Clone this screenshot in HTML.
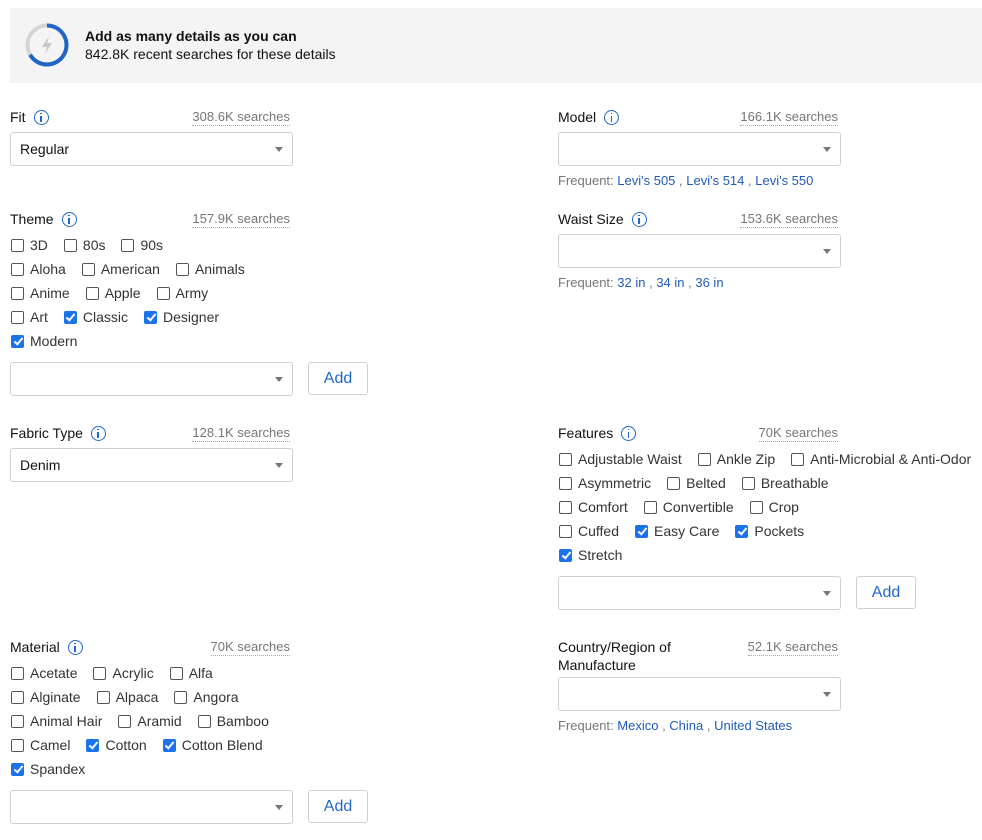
<!DOCTYPE html>
<html><head><meta charset="utf-8"><style>
*{box-sizing:border-box;margin:0;padding:0}
body{width:982px;height:840px;background:#fff;font-family:"Liberation Sans",Arial,sans-serif;color:#333;position:relative;overflow:hidden}
.a{position:absolute}
.hdr{left:10px;top:8px;width:972px;height:75px;background:#f4f4f4}
.lbl{font-size:14px;color:#111;line-height:18px;display:flex;align-items:center}
.info{display:inline-block;width:15px;height:15px;border:1.3px solid #1f66c8;border-radius:50%;margin-left:8px;position:relative}
.info:before{content:"";position:absolute;left:5.5px;top:2px;width:1.6px;height:1.6px;background:#1f66c8}
.info:after{content:"";position:absolute;left:5.5px;top:5px;width:1.6px;height:6px;background:#1f66c8}
.cnt{font-size:13px;color:#767676;border-bottom:1px dotted #aaa;line-height:16px;text-align:right}
.sel{width:283px;height:34px;border:1px solid #d0d0d0;border-radius:3px;font-size:14px;color:#111;padding:8px 0 0 9px}
.sel:after{content:"";position:absolute;right:9px;top:14px;border-left:4.5px solid transparent;border-right:4.5px solid transparent;border-top:5px solid #777}
.btn{width:60px;height:33px;border:1px solid #d0d0d0;border-radius:3px;font-size:16px;color:#1f66c8;text-align:center;line-height:31px}
.freq{font-size:13px;color:#767676}
.freq b{font-weight:normal;color:#1f5bb8}
.row{display:flex;font-size:14px;line-height:16px;height:16px;align-items:center;white-space:nowrap}
.cb{display:inline-flex;align-items:center;margin-right:16px}
.cb i{display:inline-block;width:13px;height:13px;border:1px solid #555;border-radius:2px;margin-right:6px;position:relative}
.cb i.on{background:#1a73e8;border-color:#1a73e8}
.cb i.on:after{content:"";position:absolute;left:3.5px;top:0.5px;width:3px;height:7px;border:solid #fff;border-width:0 2px 2px 0;transform:rotate(40deg)}
</style></head><body>
<div class="a hdr"></div>
<svg class="a" style="left:25px;top:23px" width="44" height="44" viewBox="0 0 44 44"><circle cx="22" cy="22" r="19.5" fill="none" stroke="#d4d4d4" stroke-width="4"/><path d="M22 2.5 A19.5 19.5 0 1 1 5.1 31.75" fill="none" stroke="#1f66c8" stroke-width="4"/><path d="M24 13 L17 24 L22 24 L20 31 L27 20 L22 20 Z" fill="#c8c8c8"/></svg>
<div class="a" style="left:85px;top:28px;font-size:14px;font-weight:bold;color:#111">Add as many details as you can</div>
<div class="a" style="left:85px;top:46px;font-size:14px;color:#111">842.8K recent searches for these details</div>

<div class="a lbl" style="left:10px;top:108px">Fit<span class="info"></span></div>
<div class="a cnt" style="right:692px;top:109px">308.6K searches</div>
<div class="a sel" style="left:10px;top:132px">Regular</div>

<div class="a lbl" style="left:10px;top:210px">Theme<span class="info"></span></div>
<div class="a cnt" style="right:692px;top:211px">157.9K searches</div>
<div class="a row" style="left:11px;top:237px"><span class="cb"><i></i>3D</span><span class="cb"><i></i>80s</span><span class="cb"><i></i>90s</span></div>
<div class="a row" style="left:11px;top:261px"><span class="cb"><i></i>Aloha</span><span class="cb"><i></i>American</span><span class="cb"><i></i>Animals</span></div>
<div class="a row" style="left:11px;top:285px"><span class="cb"><i></i>Anime</span><span class="cb"><i></i>Apple</span><span class="cb"><i></i>Army</span></div>
<div class="a row" style="left:11px;top:309px"><span class="cb"><i></i>Art</span><span class="cb"><i class="on"></i>Classic</span><span class="cb"><i class="on"></i>Designer</span></div>
<div class="a row" style="left:11px;top:333px"><span class="cb"><i class="on"></i>Modern</span></div>
<div class="a sel" style="left:10px;top:362px"></div>
<div class="a btn" style="left:308px;top:362px">Add</div>

<div class="a lbl" style="left:10px;top:424px">Fabric Type<span class="info"></span></div>
<div class="a cnt" style="right:692px;top:425px">128.1K searches</div>
<div class="a sel" style="left:10px;top:448px">Denim</div>

<div class="a lbl" style="left:10px;top:638px">Material<span class="info"></span></div>
<div class="a cnt" style="right:692px;top:639px">70K searches</div>
<div class="a row" style="left:11px;top:665px"><span class="cb"><i></i>Acetate</span><span class="cb"><i></i>Acrylic</span><span class="cb"><i></i>Alfa</span></div>
<div class="a row" style="left:11px;top:689px"><span class="cb"><i></i>Alginate</span><span class="cb"><i></i>Alpaca</span><span class="cb"><i></i>Angora</span></div>
<div class="a row" style="left:11px;top:713px"><span class="cb"><i></i>Animal Hair</span><span class="cb"><i></i>Aramid</span><span class="cb"><i></i>Bamboo</span></div>
<div class="a row" style="left:11px;top:737px"><span class="cb"><i></i>Camel</span><span class="cb"><i class="on"></i>Cotton</span><span class="cb"><i class="on"></i>Cotton Blend</span></div>
<div class="a row" style="left:11px;top:761px"><span class="cb"><i class="on"></i>Spandex</span></div>
<div class="a sel" style="left:10px;top:790px"></div>
<div class="a btn" style="left:308px;top:790px">Add</div>

<div class="a lbl" style="left:558px;top:108px">Model<span class="info"></span></div>
<div class="a cnt" style="right:144px;top:109px">166.1K searches</div>
<div class="a sel" style="left:558px;top:132px"></div>
<div class="a freq" style="left:558px;top:173px">Frequent: <b>Levi's 505</b> , <b>Levi's 514</b> , <b>Levi's 550</b></div>

<div class="a lbl" style="left:558px;top:210px">Waist Size<span class="info"></span></div>
<div class="a cnt" style="right:144px;top:211px">153.6K searches</div>
<div class="a sel" style="left:558px;top:234px"></div>
<div class="a freq" style="left:558px;top:275px">Frequent: <b>32 in</b> , <b>34 in</b> , <b>36 in</b></div>

<div class="a lbl" style="left:558px;top:424px">Features<span class="info"></span></div>
<div class="a cnt" style="right:144px;top:425px">70K searches</div>
<div class="a row" style="left:559px;top:451px"><span class="cb"><i></i>Adjustable Waist</span><span class="cb"><i></i>Ankle Zip</span><span class="cb"><i></i>Anti-Microbial &amp; Anti-Odor</span></div>
<div class="a row" style="left:559px;top:475px"><span class="cb"><i></i>Asymmetric</span><span class="cb"><i></i>Belted</span><span class="cb"><i></i>Breathable</span></div>
<div class="a row" style="left:559px;top:499px"><span class="cb"><i></i>Comfort</span><span class="cb"><i></i>Convertible</span><span class="cb"><i></i>Crop</span></div>
<div class="a row" style="left:559px;top:523px"><span class="cb"><i></i>Cuffed</span><span class="cb"><i class="on"></i>Easy Care</span><span class="cb"><i class="on"></i>Pockets</span></div>
<div class="a row" style="left:559px;top:547px"><span class="cb"><i class="on"></i>Stretch</span></div>
<div class="a sel" style="left:558px;top:576px"></div>
<div class="a btn" style="left:856px;top:576px">Add</div>

<div class="a lbl" style="left:558px;top:638px;width:150px">Country/Region of<br>Manufacture</div>
<div class="a cnt" style="right:144px;top:639px">52.1K searches</div>
<div class="a sel" style="left:558px;top:677px"></div>
<div class="a freq" style="left:558px;top:718px">Frequent: <b>Mexico</b> , <b>China</b> , <b>United States</b></div>
</body></html>
